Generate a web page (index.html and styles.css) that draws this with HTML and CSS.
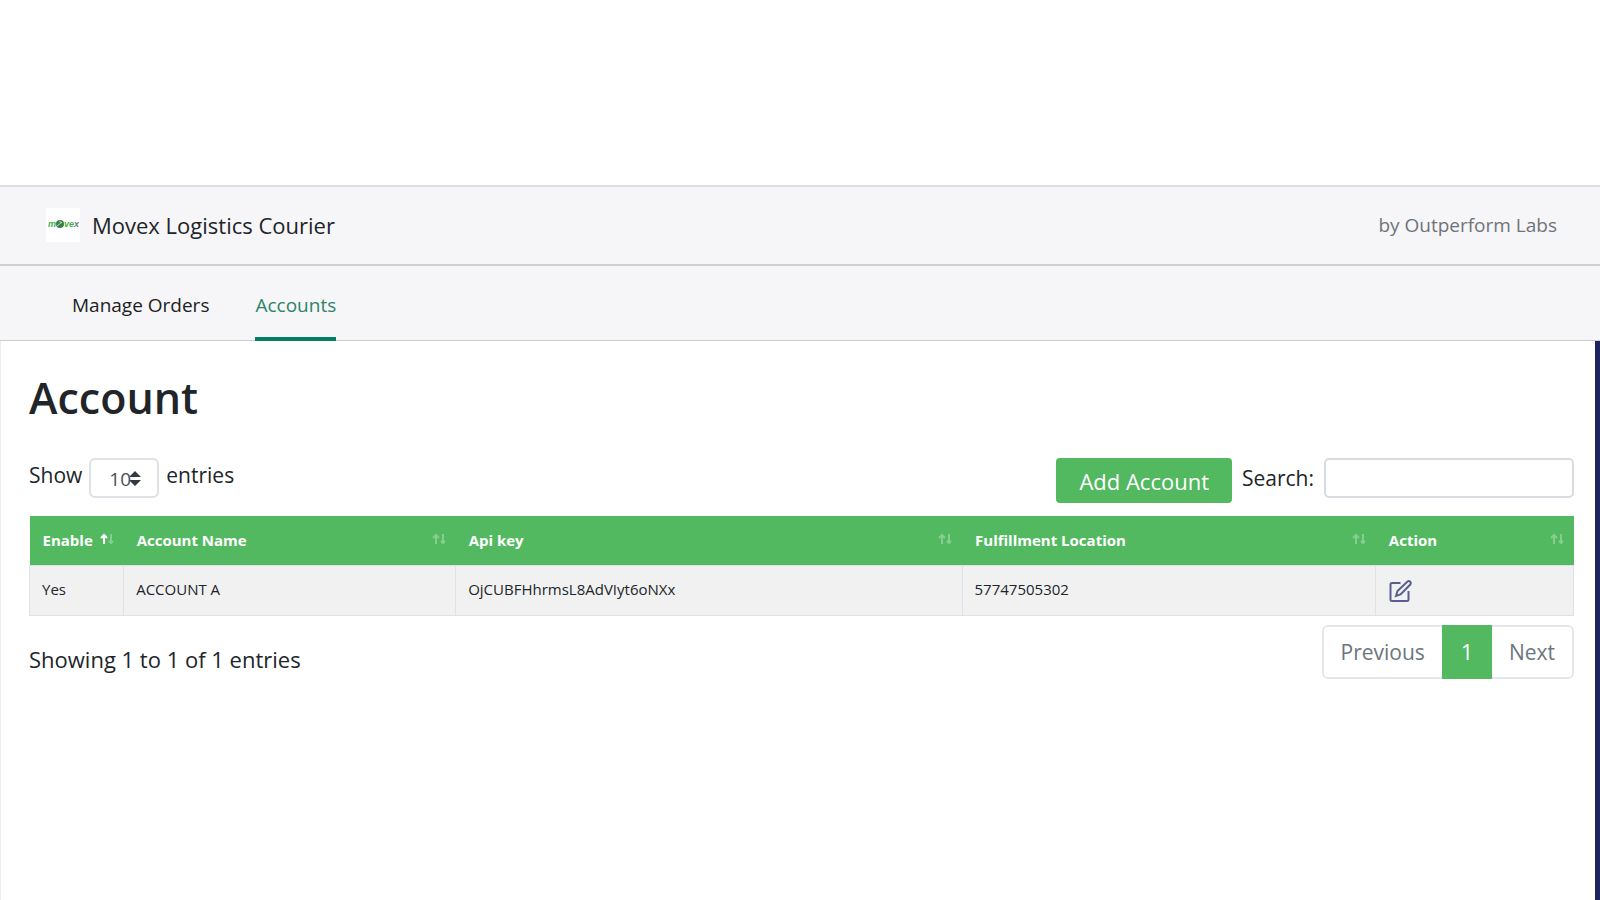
FILE: index.html
```html
<!DOCTYPE html>
<html lang="en">
<head>
  <meta charset="UTF-8" />
  <meta name="viewport" content="width=device-width, initial-scale=1.0"/>
  <title>Movex Logistics Courier</title>
  <link rel="stylesheet" href="styles.css">
</head>
<body>

  <!-- App bar -->
  <header class="topbar">
    <div class="brand">
      <svg class="logo" viewBox="0 0 34 34" aria-hidden="true">
        <rect width="34" height="34" fill="#fff"/>
        <text x="2" y="19" class="logo-text">m</text>
        <circle cx="14" cy="16" r="4" fill="#3d7d48"/>
        <path d="M11 18l5-4M13 13l3 2" stroke="#b9dcbd" stroke-width="1"/>
        <text x="18" y="19" class="logo-text">ve<tspan fill="#777">x</tspan></text>
      </svg>
      <span class="app-name">Movex Logistics Courier</span>
    </div>
    <span class="author">by Outperform Labs</span>
  </header>

  <nav class="tabs">
    <a href="#orders" class="tab">Manage Orders</a>
    <a href="#accounts" class="tab active">Accounts</a>
  </nav>

  <main class="content">
    <h1>Account</h1>

    <div class="toolbar">
      <div class="length">
        <label for="entries">Show</label>
        <select id="entries">
          <option>10</option>
          <option>25</option>
          <option>50</option>
        </select>
        <label for="entries">entries</label>
      </div>
      <div class="filter">
        <button type="button" class="add-btn">Add Account</button>
        <label for="search">Search:</label>
        <input type="search" id="search">
      </div>
    </div>

    <table class="accounts">
      <colgroup>
        <col class="col-enable">
        <col class="col-name">
        <col class="col-key">
        <col class="col-location">
        <col class="col-action">
      </colgroup>
      <thead>
        <tr>
          <th><div class="head">Enable <svg class="sort asc" viewBox="0 0 14 12"><path d="M4 11V2M1 5l3-3 3 3"/><path d="M11 1v9M9 8l2 2 2-2"/></svg></div></th>
          <th><div class="head">Account Name <svg class="sort" viewBox="0 0 14 12"><path d="M4 11V2M1 5l3-3 3 3"/><path d="M11 1v9M9 8l2 2 2-2"/></svg></div></th>
          <th><div class="head">Api key <svg class="sort" viewBox="0 0 14 12"><path d="M4 11V2M1 5l3-3 3 3"/><path d="M11 1v9M9 8l2 2 2-2"/></svg></div></th>
          <th><div class="head">Fulfillment Location <svg class="sort" viewBox="0 0 14 12"><path d="M4 11V2M1 5l3-3 3 3"/><path d="M11 1v9M9 8l2 2 2-2"/></svg></div></th>
          <th><div class="head">Action <svg class="sort" viewBox="0 0 14 12"><path d="M4 11V2M1 5l3-3 3 3"/><path d="M11 1v9M9 8l2 2 2-2"/></svg></div></th>
        </tr>
      </thead>
      <tbody>
        <tr>
          <td>Yes</td>
          <td>ACCOUNT A</td>
          <td>OjCUBFHhrmsL8AdVIyt6oNXx</td>
          <td>57747505302</td>
          <td>
            <a href="#edit" class="edit" aria-label="Edit">
              <svg viewBox="0 0 24 24">
                <path d="M12 4H3.500Q2 4 2 5.500V20.500Q2 22 3.500 22H18.500Q20 22 20 20.500V12"/>
                <path d="M7.500 17l1.500-5L19 2.500q1.500-1 2.700.2t.3 2.600L12 15.500z"/>
              </svg>
            </a>
          </td>
        </tr>
      </tbody>
    </table>

    <div class="footer">
      <div class="info">Showing 1 to 1 of 1 entries</div>
      <div class="pagination">
        <button type="button">Previous</button>
        <button type="button" class="current">1</button>
        <button type="button">Next</button>
      </div>
    </div>
  </main>

</body>
</html>
```
FILE: styles.css
```css
* {
  box-sizing: border-box;
}
body {
  font-family: "Open Sans", "Noto Sans", sans-serif;
  font-size: 22px;
  line-height: 32px;
  color: #212529;
  background: #fff;
  margin: 0;
  padding-top: 185px;
  min-height: 100vh;
  display: flex;
  flex-direction: column;
}
button, input, select {
  font: inherit;
}

.topbar {
  display: flex;
  justify-content: space-between;
  align-items: center;
  height: 81px;
  padding: 0 43px 2px 46px;
  background: #f6f6f8;
  border-top: 2px solid #dcdfe1;
  border-bottom: 2px solid #cdd0d2;
}
.brand {
  display: flex;
  align-items: center;
  gap: 12px;
}
.logo {
  width: 34px;
  height: 34px;
}
.logo-text {
  font: italic bold 9px "Liberation Sans", sans-serif;
  fill: #35b545;
}
.author {
  font-size: 19px;
  color: #6f7479;
}

.tabs {
  display: flex;
  gap: 46px;
  height: 75px;
  padding: 0 72px;
  background: #f6f6f8;
  border-bottom: 1px solid #c9cccf;
}
.tab {
  display: flex;
  align-items: center;
  margin-bottom: -1px;
  padding-top: 2px;
  font-size: 19px;
  color: #202223;
  text-decoration: none;
  border-top: 4px solid transparent;
  border-bottom: 4px solid transparent;
}
.tab.active {
  color: #2c8566;
  border-bottom-color: #008060;
}

.content {
  flex: 1;
  padding: 29px 21px 0 28px;
  border-left: 1px solid #eceef0;
  border-right: 5px solid #1d2461;
}
h1 {
  font-size: 43px;
  line-height: 56px;
  font-weight: 600;
  margin: 0 0 32px;
}

.toolbar {
  display: flex;
  justify-content: space-between;
  height: 58px;
}
.length {
  display: flex;
  align-items: flex-start;
  gap: 7px;
}
.toolbar label {
  font-size: 21px;
}
.length label {
  line-height: 34px;
}
select {
  width: 70px;
  height: 40px;
  padding: 3px 18px 1px;
  font-size: 19px;
  color: #495057;
  appearance: none;
  border: 2px solid #dee2e6;
  border-radius: 6px;
  background: #fff url("data:image/svg+xml,%3Csvg xmlns='http://www.w3.org/2000/svg' viewBox='0 0 4 5'%3E%3Cpath fill='%23343a40' d='M2 0L0 2h4zm0 5L0 3h4z'/%3E%3C/svg%3E") no-repeat right 16px center / 12px 15px;
}
.filter {
  display: flex;
  align-items: flex-start;
  gap: 10px;
}
.filter label {
  line-height: 40px;
}
.add-btn {
  height: 45px;
  padding: 0 23px;
  color: #fff;
  background: #52b960;
  border: none;
  border-radius: 4px;
}
input {
  width: 250px;
  height: 40px;
  padding: 0 10px;
  border: 2px solid #d8dce1;
  border-radius: 5px;
}

.accounts {
  width: 100%;
  table-layout: fixed;
  border-collapse: collapse;
  font-size: 15px;
  line-height: 24px;
}
.col-enable { width: 6.1%; }
.col-name { width: 21.5%; }
.col-key { width: 32.8%; }
.col-location { width: 26.8%; }
.col-action { width: 12.8%; }
th {
  height: 49px;
  padding: 0 10px 0 13px;
  text-align: left;
  font-weight: 700;
  color: #fff;
  background: #52b960;
}
.head {
  display: flex;
  justify-content: space-between;
  align-items: center;
}
.sort {
  width: 14px;
  height: 12px;
  margin-bottom: 3px;
  fill: none;
  stroke: #fff;
  stroke-width: 2;
}
.sort path {
  opacity: 0.3;
}
.sort.asc path:first-child {
  opacity: 1;
}
td {
  height: 50px;
  padding: 0 12px 3px;
  background: #f1f1f2;
  border: 1px solid #dee2e6;
}
.edit svg {
  display: block;
  width: 25px;
  height: 24px;
  margin-top: 4px;
  fill: none;
  stroke: #5a5e8e;
  stroke-width: 2;
}

.footer {
  display: flex;
  justify-content: space-between;
  padding-top: 9px;
}
.info {
  padding-top: 18px;
}
.pagination {
  display: flex;
  height: 54px;
  border: 2px solid #e3e6e9;
  border-radius: 6px;
}
.pagination button {
  padding: 0 17px;
  font-size: 21px;
  color: #6c757d;
  background: none;
  border: none;
}
.pagination .current {
  padding: 0 19px;
  margin: -2px 0;
  color: #fff;
  background: #52b960;
}
```
